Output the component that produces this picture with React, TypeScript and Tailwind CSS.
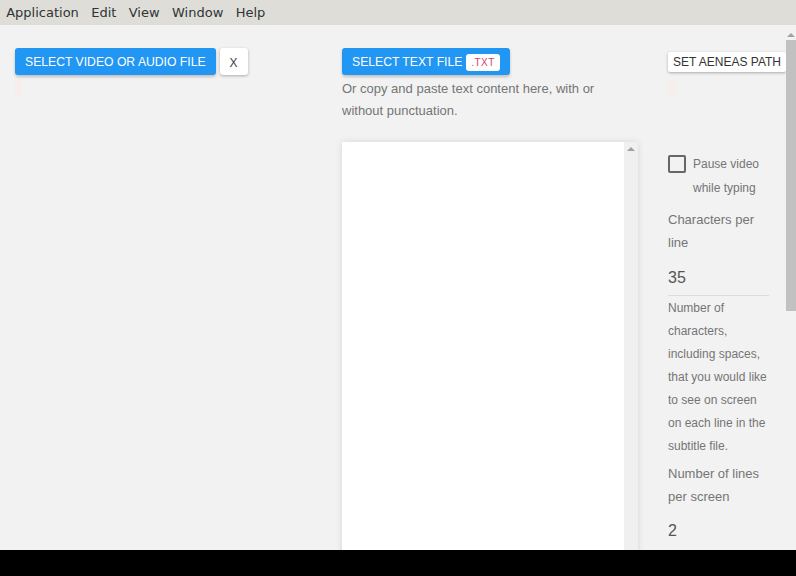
const menu = ["Application", "Edit", "View", "Window", "Help"];

function MenuBar() {
  return (
    <div className="flex h-[25px] items-center bg-[#dfddd8] font-['DejaVu_Sans',sans-serif] text-[13px] text-[#2e3436]">
      {menu.map((m) => (
        <span key={m} className="px-[6.2px]">
          {m}
        </span>
      ))}
    </div>
  );
}

function PageScrollbar() {
  return (
    <div className="flex w-[10px] flex-col items-center bg-[#f2f2f2]">
      <div className="mt-[8px] h-0 w-0 border-x-[4px] border-b-[4px] border-x-transparent border-b-[#a3a3a3]" />
      <div className="mt-[3px] h-[271px] w-[10px] bg-[#c1c1c1]" />
    </div>
  );
}

export default function App() {
  return (
    <div className="flex h-[576px] w-[796px] flex-col overflow-hidden bg-black font-['Liberation_Sans',Arial,sans-serif]">
      <MenuBar />
      <div className="flex h-[525px] bg-[#f2f2f2]">
        <div className="flex flex-1 overflow-hidden pl-[15px]">
          {/* media column */}
          <div className="w-[327px] shrink-0 pt-[23px]">
            <div className="flex items-center gap-[4px]">
              <button className="h-[27px] rounded-[3px] bg-[#2196f3] px-[10px] pt-[2px] text-[12.2px] text-white shadow-[0_2px_3px_rgba(0,0,0,0.2)]">
                SELECT VIDEO OR AUDIO FILE
              </button>
              <button className="h-[27px] w-[28px] rounded-[3px] bg-white pt-[2px] text-[12px] text-[#444] shadow-[0_1px_3px_rgba(0,0,0,0.3)]">
                X
              </button>
            </div>
            <div className="mt-[5px] h-[17px] w-[7px] rounded-[2px] bg-[#f7eded]" />
          </div>

          {/* text column */}
          <div className="w-[326px] shrink-0 pt-[23px]">
            <button className="flex h-[27px] items-center rounded-[3px] bg-[#2196f3] px-[10px] pt-[2px] text-[12.2px] text-white shadow-[0_2px_3px_rgba(0,0,0,0.2)]">
              SELECT TEXT FILE
              <span className="ml-[4px] rounded-[3px] bg-white px-[5px] py-[1px] text-[10px] tracking-[0.4px] text-[#d63f6c]">
                .TXT
              </span>
            </button>
            <p className="mt-[3px] w-[290px] text-[13px] leading-[22px] text-[#757575]">
              Or copy and paste text content here, with or without punctuation.
            </p>
            <div className="mt-[20px] flex h-[420px] w-[296px] bg-white shadow-[0_0_6px_rgba(0,0,0,0.12)]">
              <div className="flex-1" />
              <div className="flex w-[14px] flex-col items-center bg-[#f0f0f0]">
                <div className="mt-[5px] h-0 w-0 border-x-[4px] border-b-[4px] border-x-transparent border-b-[#a0a0a0]" />
              </div>
            </div>
          </div>

          {/* settings column */}
          <div className="w-[110px] shrink-0 pt-[24px]">
            <button className="h-[20px] whitespace-nowrap rounded-[2px] bg-white px-[5px] text-[12px] text-[#333] shadow-[0_1px_3px_rgba(0,0,0,0.3)]">
              SET AENEAS PATH
            </button>
            <div className="mt-[7px] h-[15px] w-[8px] rounded-[2px] bg-[#f7eded]" />

            <div className="mt-[60px] flex w-[101px] items-start gap-[7px]">
              <div className="h-[18px] w-[18px] shrink-0 rounded-[2px] border-2 border-[#666]" />
              <span className="-mt-[3px] text-[12px] leading-[24px] text-[#757575]">
                Pause video while typing
              </span>
            </div>

            <div className="mt-[8px] w-[101px] text-[13px] leading-[23px] text-[#757575]">
              Characters per line
            </div>
            <div className="mt-[14px] w-[101px] border-b border-[#ddd] pb-[7px] text-[16px] leading-[20px] text-[#555]">
              35
            </div>
            <p className="mt-[1px] w-[101px] text-[12px] leading-[23px] text-[#757575]">
              Number of characters, including spaces, that you would like to see on screen on each line in the subtitle file.
            </p>
            <div className="mt-[4px] w-[101px] text-[13px] leading-[23px] text-[#757575]">
              Number of lines per screen
            </div>
            <div className="mt-[13px] w-[101px] text-[16px] leading-[20px] text-[#555]">2</div>
          </div>
        </div>
        <PageScrollbar />
      </div>
    </div>
  );
}
